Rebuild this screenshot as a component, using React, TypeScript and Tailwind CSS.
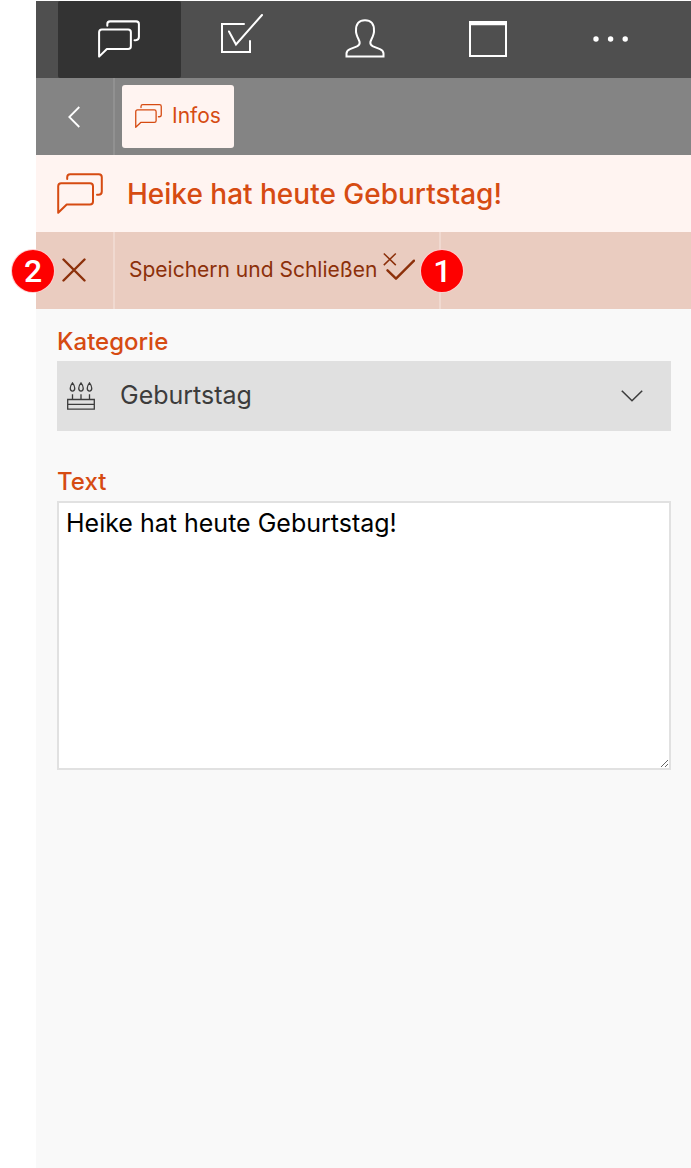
import React, { useState } from "react";

function ChatIcon({ className, stroke }: { className: string; stroke: number }) {
  return (
    <svg viewBox="0 0 46 41" fill="none" stroke="currentColor" strokeWidth={stroke} strokeLinecap="round" strokeLinejoin="round" className={className} aria-hidden="true">
      <path d="M1.2 39.8V13.2q0-3 3-3H33q3 0 3 3v15.3q0 3-3 3H9.7z" />
      <path d="M10.2 6V4.2q0-3 3-3H41.8q3 0 3 3V18.4q0 3.4-3.4 3.4H40" />
    </svg>
  );
}

function TaskIcon() {
  return (
    <svg viewBox="0 0 42 49" fill="none" stroke="currentColor" strokeWidth="2" strokeLinecap="round" className="h-[49px] w-[42px]" aria-hidden="true">
      <path d="M23 10H1v28h28V27" />
      <path d="M8 17.500L15 30.500L41 1" />
    </svg>
  );
}

function PersonIcon() {
  return (
    <svg viewBox="0 0 40 40" fill="none" stroke="currentColor" strokeWidth="2" className="size-10" aria-hidden="true">
      <path d="M1.500 37.500V34.500c0-2.500 1.500-3.500 3.500-4.400l7-2.700c2.500-1 3-1.900 2.600-4.400c-.3-1.800-2.100-4.200-3-7.500c-.4-1.500-.7-2.200-.6-3.500C10.700 4.800 14 1.200 20 1.200s9.300 3.600 9 10.800c.1 1.300-.2 2-.6 3.500c-.9 3.300-2.700 5.700-3 7.500c-.4 2.500.1 3.400 2.600 4.400l7 2.700c2 .9 3.500 1.900 3.500 4.400V37.500z" />
    </svg>
  );
}

function WindowIcon() {
  return (
    <svg viewBox="0 0 38 36" fill="none" stroke="currentColor" strokeWidth="2" className="h-9 w-[38px]" aria-hidden="true">
      <path d="M1 1h36v34H1z" />
      <path d="M0 2.200h38" strokeWidth="4" />
    </svg>
  );
}

function DotsIcon() {
  return (
    <svg viewBox="0 0 36 6" fill="currentColor" className="h-1.5 w-9" aria-hidden="true">
      <circle cx="3" cy="3" r="2.700" />
      <circle cx="17.600" cy="3" r="2.700" />
      <circle cx="32.200" cy="3" r="2.700" />
    </svg>
  );
}

function BackIcon() {
  return (
    <svg viewBox="0 0 12 22" fill="none" stroke="currentColor" strokeWidth="1.800" className="h-[22px] w-3" aria-hidden="true">
      <path d="M11.300 1L1.300 11l10 10" />
    </svg>
  );
}

function CloseIcon() {
  return (
    <svg viewBox="0 0 24 24" fill="none" stroke="currentColor" strokeWidth="2.400" strokeLinecap="round" className="size-6" aria-hidden="true">
      <path d="M1.500 1.500l21 21M22.500 1.500l-21 21" />
    </svg>
  );
}

function SaveCloseIcon() {
  return (
    <svg viewBox="0 0 32 36" fill="none" stroke="currentColor" className="h-9 w-8 shrink-0" aria-hidden="true">
      <path d="M.8 1.500l12 11.600M12.800 1.500L.8 13.100" strokeWidth="1.500" />
      <path d="M4.500 18.300l8.500 8.400L31 8.700" strokeWidth="2.400" strokeLinecap="round" strokeLinejoin="round" />
    </svg>
  );
}

function CakeIcon() {
  return (
    <svg viewBox="0 0 28 28" fill="none" stroke="currentColor" strokeWidth="1.300" className="size-7" aria-hidden="true">
      <path d="M.7 17.500h26.600v9.600H.7zM.7 22.300h26.600" />
      <path d="M5.500 12.300v5M14 12.300v5M22.500 12.300v5" />
      <path d="M5.500.9c3 3.600 3 8.200 0 8.200s-3-4.600 0-8.200zM14 .9c3 3.600 3 8.200 0 8.200s-3-4.600 0-8.200zM22.500.9c3 3.600 3 8.200 0 8.200s-3-4.600 0-8.200z" />
    </svg>
  );
}

function ChevronIcon() {
  return (
    <svg viewBox="0 0 22 12" fill="none" stroke="currentColor" strokeWidth="1.600" className="h-3 w-[22px]" aria-hidden="true">
      <path d="M.8.8L11 10.700L21.200.8" />
    </svg>
  );
}

const badge =
  "absolute top-1/2 z-10 flex size-[44px] -translate-y-1/2 items-center justify-center rounded-full border border-white/80 bg-[#fe0000] font-['Roboto',sans-serif] text-[32px] leading-none font-medium text-white";

const tabs = [
  { label: "Infos", icon: <ChatIcon className="h-[38px] w-[42px]" stroke={2.2} /> },
  { label: "Aufgaben", icon: <TaskIcon /> },
  { label: "Kontakte", icon: <PersonIcon /> },
  { label: "Kalender", icon: <WindowIcon /> },
  { label: "Mehr", icon: <DotsIcon /> },
];

export default function App() {
  const [active, setActive] = useState(0);
  const [text, setText] = useState("Heike hat heute Geburtstag!");

  return (
    <div className="min-h-screen bg-white pt-px pl-9 font-['Inter',sans-serif]">
      <div className="min-h-[calc(100vh-1px)] bg-[#f9f9f9]">
        <nav className="flex h-[77px] bg-[#4f4f4f] pr-[18px] pl-[22px] text-white">
          {tabs.map((tab, i) => (
            <button
              key={tab.label}
              type="button"
              aria-label={tab.label}
              onClick={() => setActive(i)}
              className={`flex flex-1 items-center justify-center rounded-xs pr-0.5 pb-0.5 ${i === active ? "bg-[#333333]" : ""}`}
            >
              {tab.icon}
            </button>
          ))}
        </nav>

        <div className="flex h-[77px] items-center bg-[#848484]">
          <button type="button" aria-label="Zurück" className="flex h-full w-[79px] items-center justify-center border-r-2 border-[#919191] pr-0.5 text-white">
            <BackIcon />
          </button>
          <a href="#infos" className="ml-[7px] flex h-[63px] items-center gap-2.5 rounded-[3px] bg-[#fff4f1] px-[13px] pb-0.5 text-[21px] text-[#d64b12]">
            <ChatIcon className="h-6 w-[27px]" stroke={2.2} />
            Infos
          </a>
        </div>

        <header className="flex h-[77px] items-center gap-6 bg-[#fff4f1] pl-[21px] text-[#d64b12]">
          <ChatIcon className="h-[41px] w-[46px]" stroke={2} />
          <h1 className="text-[28px] font-medium">Heike hat heute Geburtstag!</h1>
        </header>

        <div className="flex h-[77px] bg-[#eaccc0] text-[#8c300a]">
          <button type="button" aria-label="Schließen" className="relative flex w-[79px] items-center justify-center border-r-2 border-[#f0d9d0] pr-0.5 pb-0.5">
            <CloseIcon />
            <span className={`${badge} -left-[25px]`}>2</span>
          </button>
          <button type="button" className="relative flex items-center gap-1.5 border-r-2 border-[#f0d9d0] pr-6 pb-0.5 pl-3.5 text-[21px]">
            <span>Speichern und Schließen</span>
            <SaveCloseIcon />
            <span className={`${badge} -right-[25px]`}>1</span>
          </button>
        </div>

        <main className="flex flex-col pt-[15px] pr-5 pl-[21px]">
          <label htmlFor="category" className="mb-px text-[24px] leading-9 font-medium text-[#d64b12]">
            Kategorie
          </label>
          <div className="relative h-[70px] text-[#3c3c3c]">
            <select id="category" className="h-full w-full appearance-none bg-[#e0e0e0] pr-14 pl-[63px] text-[25px]">
              <option>Geburtstag</option>
            </select>
            <span className="pointer-events-none absolute inset-y-0 left-2.5 flex items-center">
              <CakeIcon />
            </span>
            <span className="pointer-events-none absolute inset-y-0 right-7 flex items-center">
              <ChevronIcon />
            </span>
          </div>
          <label htmlFor="text" className="mt-[33px] mb-px text-[24px] leading-9 font-medium text-[#d64b12]">
            Text
          </label>
          <textarea
            id="text"
            value={text}
            onChange={(e) => setText(e.target.value)}
            className="h-[269px] w-full resize border-2 border-[#e1e1e1] bg-white px-[7px] py-1 text-[25px] leading-8 text-black"
          />
        </main>
      </div>
    </div>
  );
}
